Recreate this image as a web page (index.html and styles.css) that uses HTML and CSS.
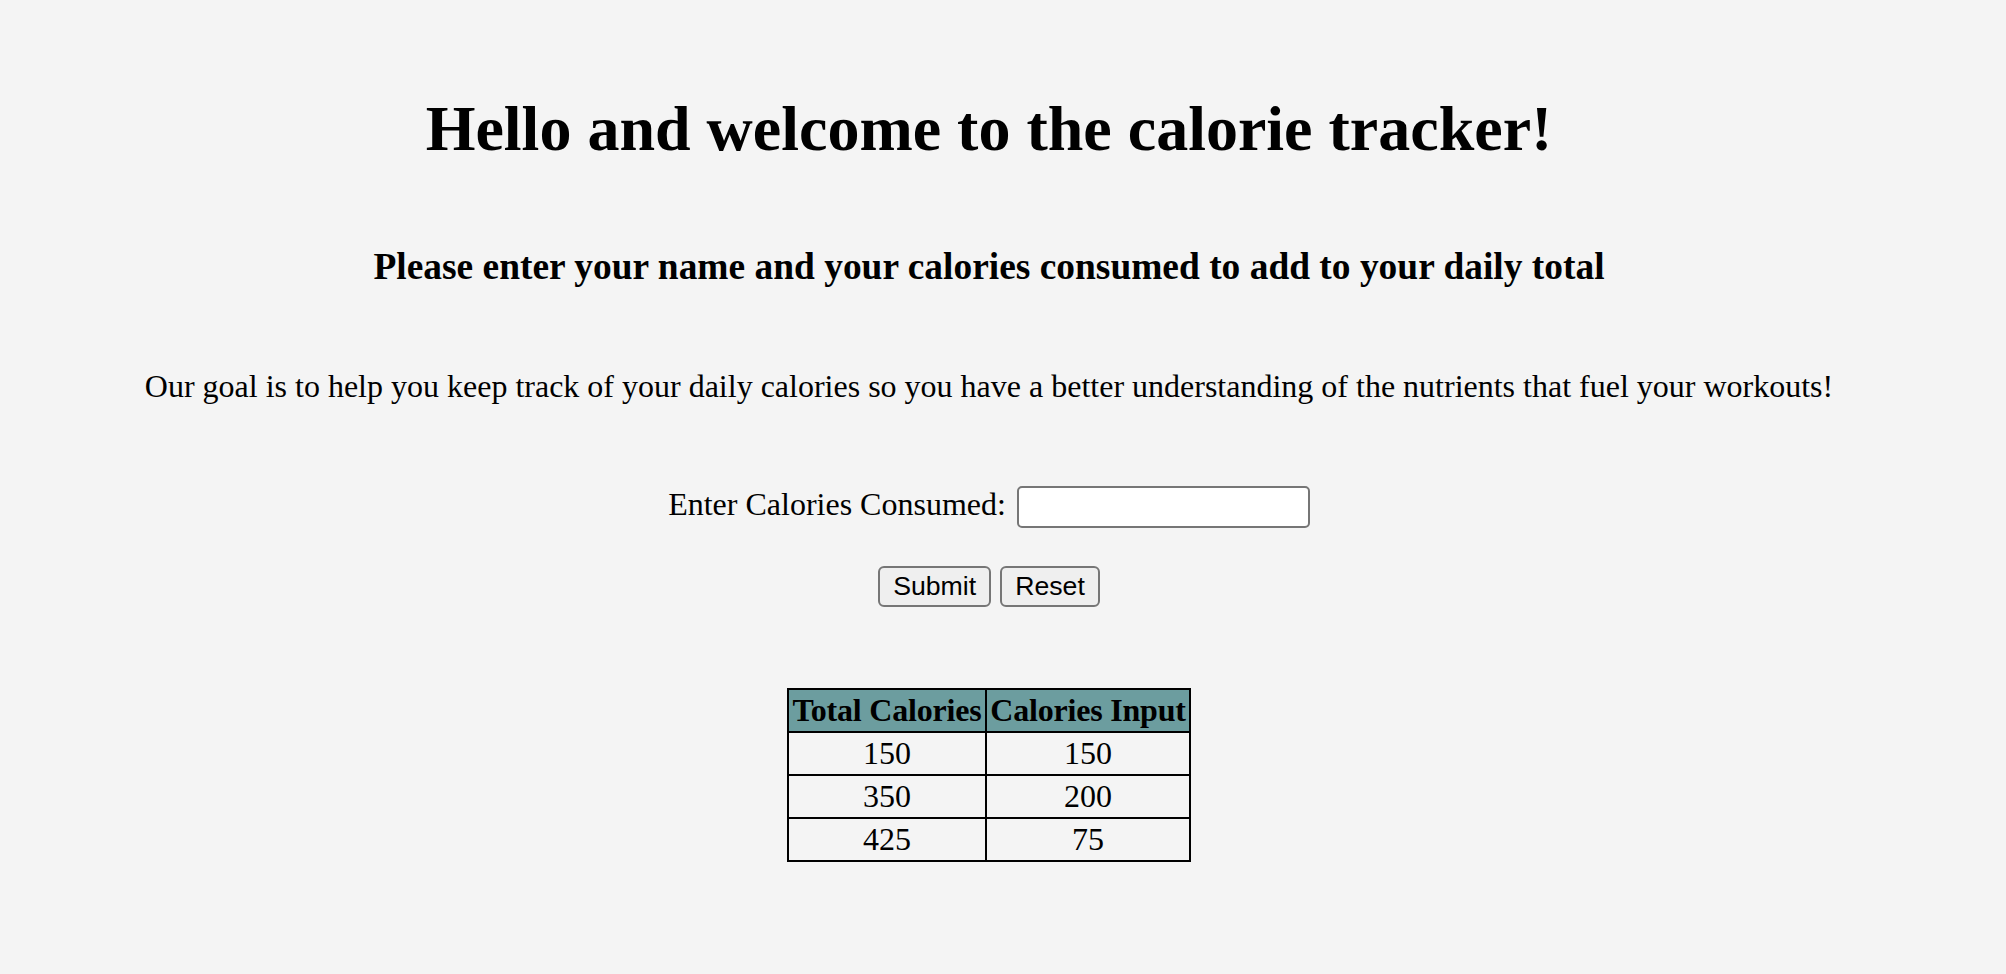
FILE: index.html
```html
<!DOCTYPE html>
<html lang="en">
<head>
<meta charset="utf-8">
<title>Calorie Tracker</title>
<link rel="stylesheet" href="styles.css">
</head>
<body>
<main class="page">
  <h1 class="title">Hello and welcome to the calorie tracker!</h1>
  <h3 class="subtitle">Please enter your name and your calories consumed to add to your daily total</h3>
  <p class="intro">Our goal is to help you keep track of your daily calories so you have a better understanding of the nutrients that fuel your workouts!</p>
  <form class="tracker">
    <div class="field-row">
      <label class="field-label" for="calories">Enter Calories Consumed:</label>
      <input class="field-input" type="text" id="calories" name="calories">
    </div>
    <div class="button-row">
      <button class="btn" type="submit">Submit</button>
      <button class="btn" type="reset">Reset</button>
    </div>
  </form>
  <table class="totals">
    <thead>
      <tr>
        <th class="col-total">Total Calories</th>
        <th class="col-input">Calories Input</th>
      </tr>
    </thead>
    <tbody>
      <tr><td>150</td><td>150</td></tr>
      <tr><td>350</td><td>200</td></tr>
      <tr><td>425</td><td>75</td></tr>
    </tbody>
  </table>
</main>
</body>
</html>
```
FILE: styles.css
```css
html, body {
  margin: 0;
  background: #f4f4f4;
}

body {
  padding: 0 44px 0 16px;
  font-family: "Liberation Serif", "Times New Roman", serif;
  color: #000;
}

.page {
  display: flex;
  flex-direction: column;
  align-items: center;
  padding-top: 92px;
}

.title {
  margin: 0;
  font-size: 64px;
  line-height: 74px;
  font-weight: bold;
  text-align: center;
}

.subtitle {
  margin: 80px 0 0;
  font-size: 37.44px;
  line-height: 42px;
  font-weight: bold;
  text-align: center;
}

.intro {
  margin: 80px 0 0;
  font-size: 32px;
  line-height: 36px;
  text-align: center;
}

.tracker {
  display: flex;
  flex-direction: column;
  align-items: center;
  margin-top: 82px;
}

.field-row {
  display: flex;
  align-items: flex-start;
  gap: 11px;
}

.field-label {
  font-size: 32px;
  line-height: 36px;
}

.field-input {
  box-sizing: border-box;
  width: 293px;
  height: 42px;
  margin: 0;
  padding: 2px 4px;
  border: 2px solid #767676;
  border-radius: 5px;
  background: #fff;
  font-family: "Liberation Sans", Arial, sans-serif;
  font-size: 26.67px;
}

.button-row {
  display: flex;
  gap: 9px;
  margin-top: 38px;
}

.btn {
  box-sizing: border-box;
  height: 41px;
  margin: 0;
  padding: 0 13px;
  border: 2px solid #767676;
  border-radius: 6px;
  background: #efefef;
  color: #000;
  font-family: "Liberation Sans", Arial, sans-serif;
  font-size: 26.67px;
  line-height: 1;
}

.totals {
  margin-top: 81px;
  border-collapse: collapse;
  font-size: 32px;
}

.totals th,
.totals td {
  padding: 2px;
  border: 2px solid #000;
  text-align: center;
  white-space: nowrap;
}

.totals th {
  background: #6c9d9f;
  font-weight: bold;
  letter-spacing: -0.2px;
}

.col-total {
  width: 192px;
}

.col-input {
  width: 198px;
}
```
